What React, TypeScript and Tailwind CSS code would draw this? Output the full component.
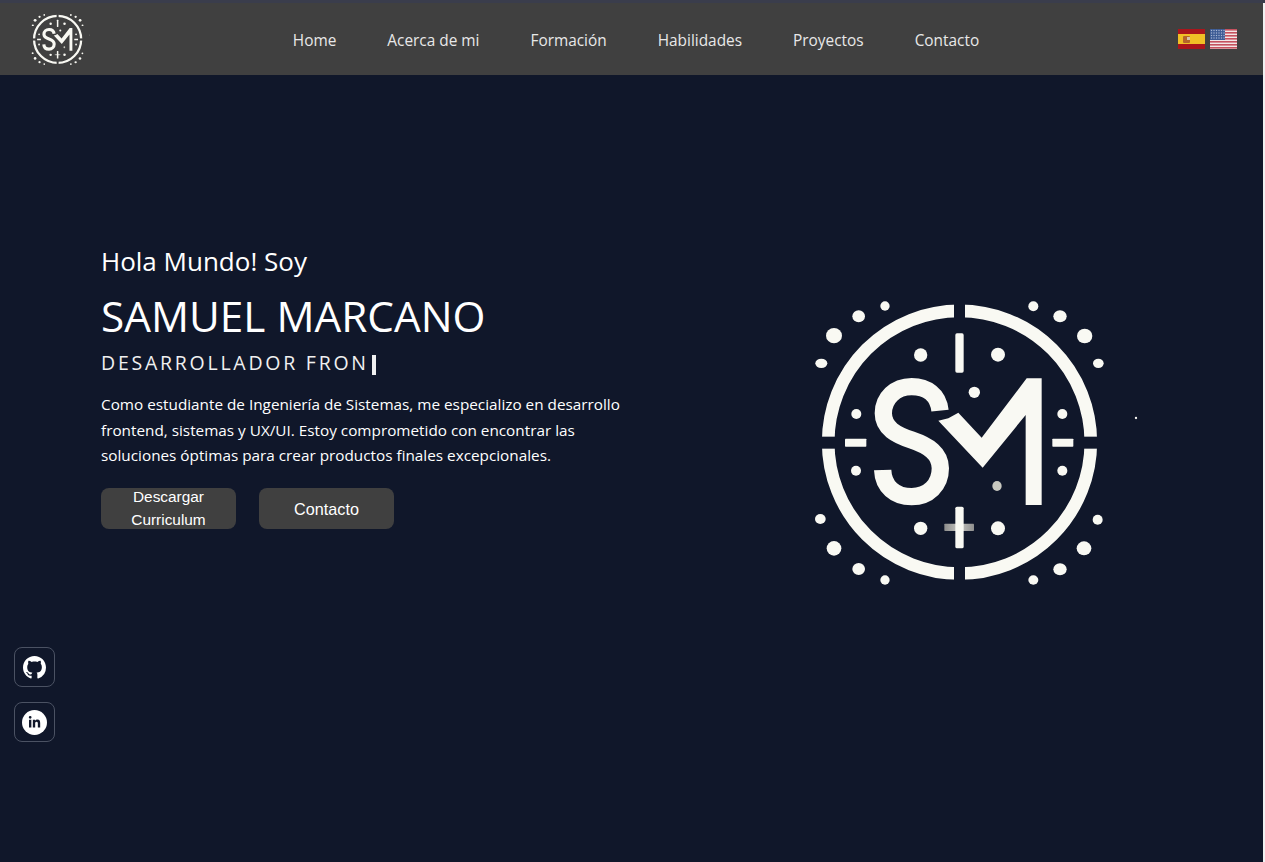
import React from 'react'
import { BsGithub } from 'react-icons/bs'
import { FaLinkedinIn } from 'react-icons/fa'

const outerDots = [
  [255, 48, 14, 14], [176, 79, 19, 18], [102, 137, 24, 23], [64, 220, 18, 14],
  [700, 49, 15, 15], [780, 79, 20, 18], [854, 138, 23, 22], [895, 220, 16, 14],
  [61, 687, 16, 15], [102, 775, 22, 22], [176, 837, 19, 18], [255, 870, 14, 14],
  [893, 689, 15, 15], [852, 775, 22, 21], [780, 838, 20, 18], [700, 870, 15, 14],
]
const innerDots = [
  [362, 195, 20], [594, 194, 21], [523, 307, 17], [169, 372, 15], [787, 372, 15],
  [168, 542, 15], [787, 542, 15], [362, 715, 20], [594, 715, 21],
]

function Logo({ className }: { className: string }) {
  return (
    <svg viewBox="0 0 1020 900" className={className} fill="#f9f9f3">
      <defs>
        <linearGradient id="plus-fade">
          <stop offset="0" stopColor="#8d8d8c" />
          <stop offset="0.5" stopColor="#c4c4c0" />
          <stop offset="1" stopColor="#8f8f8e" />
        </linearGradient>
      </defs>
      <mask id="ring-cut">
        <rect width="1020" height="900" fill="white" />
        <rect x="462" y="0" width="33" height="900" fill="black" />
        <rect x="0" y="440" width="1020" height="36" fill="black" />
      </mask>
      <circle cx="478.5" cy="456.5" r="394" fill="none" stroke="#f9f9f3" strokeWidth="38" mask="url(#ring-cut)" />
      {outerDots.map(([cx, cy, rx, ry]) => (
        <ellipse key={`${cx}-${cy}`} cx={cx} cy={cy} rx={rx} ry={ry} />
      ))}
      {innerDots.map(([cx, cy, r]) => (
        <circle key={`${cx}-${cy}`} cx={cx} cy={cy} r={r} />
      ))}
      <ellipse cx="591" cy="588" rx="14" ry="15" fill="#c9c9c0" />
      <rect x="466" y="130" width="25" height="118" rx="5" />
      <rect x="135" y="446" width="64" height="24" rx="2" />
      <rect x="757" y="446" width="63" height="24" rx="2" />
      <rect x="433" y="701" width="89" height="22" rx="2" fill="url(#plus-fade)" />
      <rect x="466" y="650" width="25" height="125" rx="5" />
      <path
        d="M420 362C415 315 380 290 335 290C285 290 250 325 250 370C250 415 290 435 335 450C385 467 421 490 421 535C421 585 385 620 335 620C285 620 250 590 248 540"
        fill="none"
        stroke="#f9f9f3"
        strokeWidth="52"
      />
      <path d="M415 392L445 385L475 368L545 443L680 265L725 265L725 645L677 645L677 375L548 533Z" />
      <circle cx="1008" cy="384" r="3.5" />
    </svg>
  )
}

function SpainFlag() {
  return (
    <svg viewBox="0 0 27 20" className="h-5 w-[27px]">
      <rect width="27" height="20" fill="#aa151b" />
      <rect y="5" width="27" height="10" fill="#f1bf26" />
      <rect x="5" y="7" width="7" height="7" rx="1" fill="#b5642a" />
      <rect x="9" y="8" width="3" height="3" fill="#d8c3a8" />
    </svg>
  )
}

function UsFlag() {
  return (
    <svg viewBox="0 0 27 20" className="h-5 w-[27px]">
      <rect width="27" height="20" fill="#f3e6e6" />
      {[0, 3, 6, 9, 12, 15, 18].map((y) => (
        <rect key={y} y={y} width="27" height="1.6" fill="#c5525f" />
      ))}
      <rect width="15" height="11" fill="#3c5a94" />
      {[1.5, 4, 6.5, 9].map((y) =>
        [1.5, 4, 6.5, 9, 11.5, 14].map((x) => (
          <rect key={`${x}-${y}`} x={x - 0.6} y={y - 0.6} width="1.2" height="1.2" fill="#a9b8d6" />
        )),
      )}
    </svg>
  )
}

const links = ['Home', 'Acerca de mi', 'Formación', 'Habilidades', 'Proyectos', 'Contacto']

export default function App() {
  return (
    <div className="relative min-h-[862px] bg-[#10172a] font-['Open_Sans',sans-serif] text-white">
      <header className="flex h-[75px] items-center justify-between border-t-[3px] border-[#3a3d4c] bg-[#404040] pr-7 pl-[29px]">
        <Logo className="h-[54px] w-[61px]" />
        <nav className="mt-[3px] flex gap-[51px] pl-[4px] text-[15.4px] text-[#e8e8e8]">
          {links.map((link) => (
            <a key={link} href="#">{link}</a>
          ))}
        </nav>
        <div className="flex gap-[5px]">
          <SpainFlag />
          <UsFlag />
        </div>
      </header>

      <main className="flex items-start justify-between pt-[168px] pr-[125px] pl-[101px]">
        <section className="w-[530px]">
          <p className="text-[26px] leading-[36px]">Hola Mundo! Soy</p>
          <h1 className="mt-[7px] text-[42.3px] leading-[60px]">SAMUEL MARCANO</h1>
          <p className="mt-[1px] text-[19.5px] leading-[32px] tracking-[2.75px] text-[#f0f0f0]">
            DESARROLLADOR FRON
            <span className="ml-[3px] inline-block h-5 w-[4px] bg-[#f0f0f0] align-[-5px]" />
          </p>
          <p className="mt-[13px] text-[15.3px] leading-[25.5px]">
            Como estudiante de Ingeniería de Sistemas, me especializo en desarrollo frontend, sistemas y UX/UI. Estoy comprometido con encontrar las soluciones óptimas para crear productos finales excepcionales.
          </p>
          <div className="mt-[19px] flex gap-[23px] font-['Liberation_Sans',sans-serif]">
            <button className="flex h-[41px] w-[135px] items-center justify-center rounded-lg bg-[#404040] text-[15.4px] leading-[23px]">
              Descargar Curriculum
            </button>
            <button className="h-[41px] w-[135px] rounded-lg bg-[#404040] pt-[3px] text-[16.2px]">Contacto</button>
          </div>
        </section>
        <Logo className="mt-[47px] h-[300px] w-[340px]" />
      </main>

      <aside className="absolute top-[647px] left-[14px] flex flex-col gap-[15px]">
        <a href="#" className="flex h-10 w-[41px] items-center justify-center rounded-lg border border-[#4b5263]">
          <BsGithub className="mt-px h-[23px] w-[23px]" />
        </a>
        <a href="#" className="flex h-10 w-[41px] items-center justify-center rounded-lg border border-[#4b5263]">
          <span className="flex h-[25px] w-[25px] items-center justify-center rounded-full bg-white text-[#10172a]">
            <FaLinkedinIn className="h-[13px] w-[13px]" />
          </span>
        </a>
      </aside>

      <div className="absolute top-[3px] right-0 bottom-0 w-[2px] bg-[#f1f1f1]" />
    </div>
  )
}
